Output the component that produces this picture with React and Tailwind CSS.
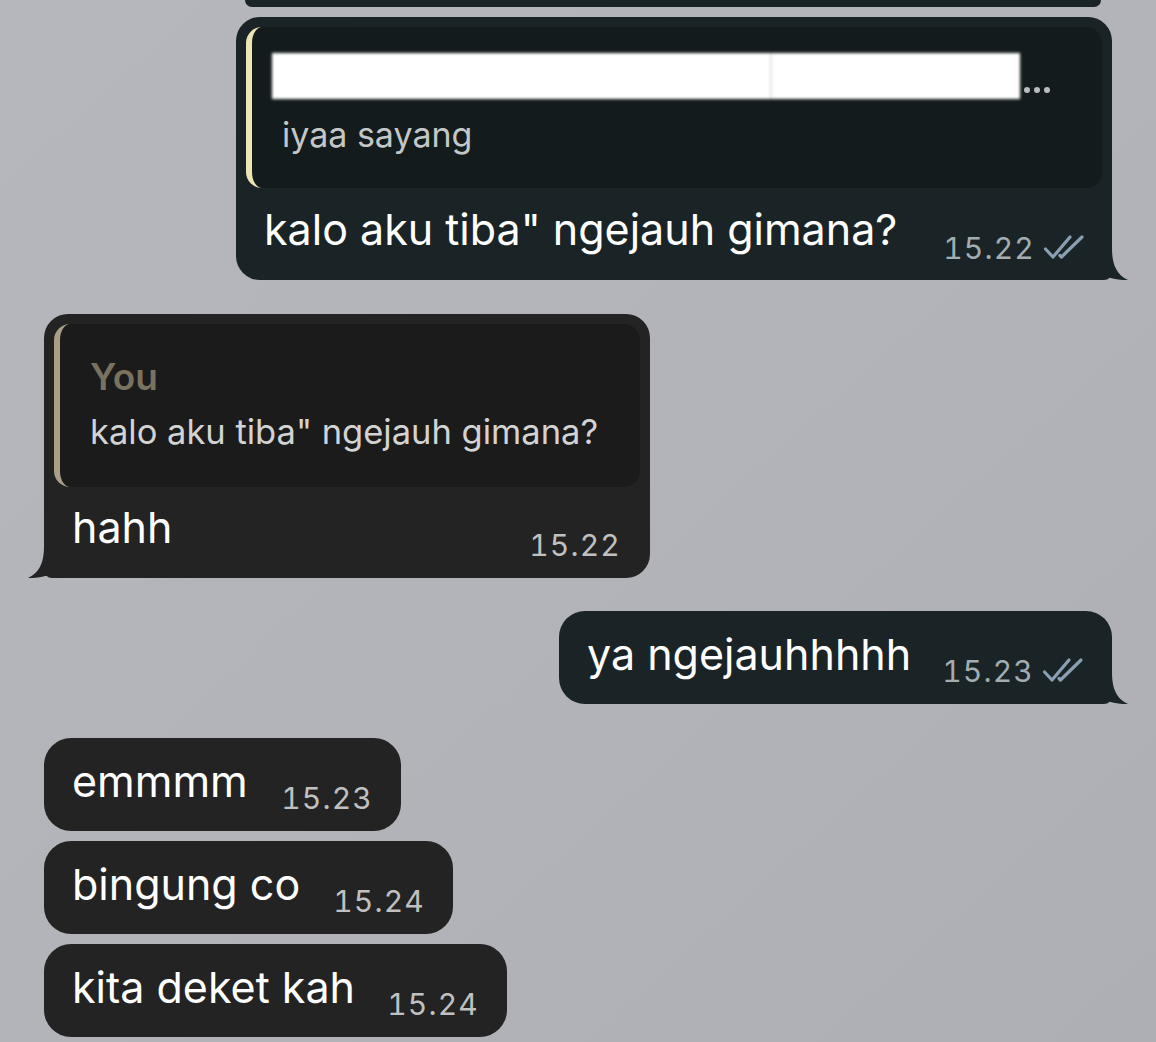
import React from "react";

function Tail({ color, side }) {
  const pos = side === "right" ? "-right-[16px]" : "-left-[16px] -scale-x-100";
  return (
    <svg
      className={`absolute bottom-0 ${pos}`}
      width="40"
      height="32"
      viewBox="0 0 40 32"
    >
      <path
        d="M0 0 H24 C24 14 27 26 40 32 C32 32.5 24 30.5 18 28.5 C14 30.5 8 32 0 32 Z"
        fill={color}
      />
    </svg>
  );
}

function Checks() {
  return (
    <svg width="42" height="26" viewBox="0 0 42 26" className="ml-[8px] mb-[2px]">
      <path
        d="M2.5 15 L10 23 L27 3"
        fill="none"
        stroke="#8aa0b2"
        strokeWidth="3.2"
        strokeLinecap="round"
        strokeLinejoin="round"
      />
      <path
        d="M17 21.5 L18.5 23 L39 3"
        fill="none"
        stroke="#8aa0b2"
        strokeWidth="3.2"
        strokeLinecap="round"
        strokeLinejoin="round"
      />
    </svg>
  );
}

function Time({ children, color, checks }) {
  return (
    <div className="flex items-center shrink-0">
      <span
        className={`text-[30px] leading-[36px] tracking-[0.04em] tabular-nums ${color}`}
      >
        {children}
      </span>
      {checks && <Checks />}
    </div>
  );
}

function SimpleBubble({ text, time, out, width }) {
  return (
    <div
      className={`relative flex items-end justify-between pl-[28px] pr-[28px] pt-[17px] pb-[15px] ${width} ${
        out
          ? "self-end bg-[#1a2427] rounded-[26px] rounded-br-[8px]"
          : "self-start bg-[#232323] rounded-[27px]"
      }`}
    >
      <span className="text-[43px] leading-[52px] text-white mb-[9px] whitespace-nowrap">
        {text}
      </span>
      <Time color={out ? "text-[#a3adb1]" : "text-[#c0c0c0]"} checks={out}>
        {time}
      </Time>
      {out && <Tail color="#1a2427" side="right" />}
    </div>
  );
}

export default function App() {
  return (
    <div
      className="w-[1156px] h-[1042px] overflow-hidden flex flex-col px-[44px] bg-gradient-to-br from-[#b6b7bc] via-[#b3b4b9] to-[#aeafb4]"
      style={{ fontFamily: "Inter, 'Noto Sans', sans-serif" }}
    >
      {/* partial bubble at top */}
      <div className="self-end mr-[11px] w-[856px] h-[7px] bg-[#1a2427] rounded-b-[18px]" />

      {/* bubble 1 (outgoing with quote) */}
      <div className="relative self-end mt-[10px] w-[876px] bg-[#1a2427] rounded-[24px] rounded-br-[8px] p-[10px] pb-[14px]">
        <div className="h-[161px] rounded-[16px] overflow-hidden border-l-[6px] border-[#ede4b4] bg-[#131b1d] pl-[30px] pr-[49px] pt-[26px]">
          <div className="flex items-end">
            <div className="relative -ml-[10px] w-[748px] h-[46px] bg-white blur-[1.5px]">
              <div className="absolute left-[498px] top-0 h-full w-[2px] bg-[#e4e4e4]" />
            </div>
            <div className="flex gap-[4px] ml-[4px] mb-[6px]">
              <span className="w-[6px] h-[6px] rounded-full bg-[#b7bcbe]" />
              <span className="w-[6px] h-[6px] rounded-full bg-[#b7bcbe]" />
              <span className="w-[6px] h-[6px] rounded-full bg-[#b7bcbe]" />
            </div>
          </div>
          <div className="mt-[15px] text-[34px] leading-[42px] text-[#c3c7c8]">
            iyaa sayang
          </div>
        </div>
        <div className="flex items-end justify-between pl-[18px] pr-[17px] mt-[15px]">
          <span className="text-[43px] leading-[52px] text-white mb-[11px] whitespace-nowrap">
            kalo aku tiba" ngejauh gimana?
          </span>
          <Time color="text-[#a3adb1]" checks>
            15.22
          </Time>
        </div>
        <Tail color="#1a2427" side="right" />
      </div>

      {/* bubble 2 (incoming with quote) */}
      <div className="relative self-start mt-[34px] w-[606px] bg-[#232323] rounded-[24px] rounded-bl-[8px] p-[10px] pb-[15px]">
        <div className="h-[163px] rounded-[16px] overflow-hidden border-l-[6px] border-[#a99e86] bg-[#1b1b1b] pl-[30px] pr-[20px] pt-[31px]">
          <div className="text-[37px] leading-[44px] font-semibold text-[#79725f]">
            You
          </div>
          <div className="mt-[12px] text-[34.5px] leading-[42px] text-[#d3d3d3] whitespace-nowrap">
            kalo aku tiba" ngejauh gimana?
          </div>
        </div>
        <div className="flex items-end justify-between pl-[18px] pr-[19px] mt-[14px]">
          <span className="text-[43px] leading-[52px] text-white mb-[10px]">hahh</span>
          <Time color="text-[#c0c0c0]">15.22</Time>
        </div>
        <Tail color="#232323" side="left" />
      </div>

      {/* bubble 3 */}
      <div className="mt-[33px] flex flex-col">
        <SimpleBubble text="ya ngejauhhhhh" time="15.23" out width="w-[553px]" />
      </div>

      {/* bubbles 4-6 */}
      <div className="mt-[34px] flex flex-col gap-[10px]">
        <SimpleBubble text="emmmm" time="15.23" width="w-[357px]" />
        <SimpleBubble text="bingung co" time="15.24" width="w-[409px]" />
        <SimpleBubble text="kita deket kah" time="15.24" width="w-[463px]" />
      </div>
    </div>
  );
}
